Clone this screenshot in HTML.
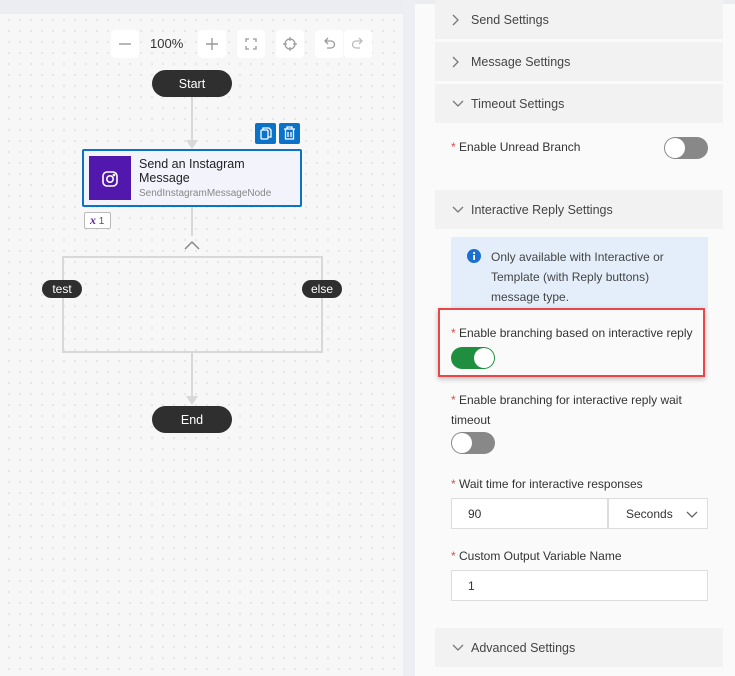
<!DOCTYPE html>
<html><head><meta charset="utf-8"><style>
*{box-sizing:border-box;margin:0;padding:0}
body{width:735px;height:676px;overflow:hidden;position:relative;background:#fafafa;font-family:"Segoe UI","Liberation Sans",sans-serif;font-size:12px;color:#333}
.a{position:absolute}
#canvas{left:0;top:0;width:403px;height:676px;background-color:#f7f7f7;background-image:radial-gradient(circle,#b4b8c0 0.6px,transparent 0.8px);background-size:11px 11px;background-position:3.5px 14.5px}
#top{left:0;top:0;width:403px;height:14px;background:#ecedf1}
#strip{left:403px;top:0;width:12px;height:676px;background:#eceef3}
.tb{background:#fff;width:28px;height:28px;border-radius:4px;top:30px;color:#999;display:flex;align-items:center;justify-content:center}
.pill{background:#2f2f2f;color:#fff;border-radius:14px;display:flex;align-items:center;justify-content:center}
.hdr{left:435px;width:288px;height:39px;background:#f2f2f2;font-size:12.5px;color:#444;display:flex;align-items:center;padding-left:36px}
.hdr svg{position:absolute;left:17px;top:14px}
.lbl{font-size:12px;color:#333}
.lbl b{color:#e04a4a;font-weight:normal}
.tog{width:44px;height:22px;border-radius:11px;background:#888}
.tog i{position:absolute;top:1px;width:20px;height:20px;border-radius:50%;background:#fff}
.inp{border:1px solid #ddd;background:#fff;height:31px;font-size:12px;display:flex;align-items:center;padding-left:16px}
</style></head><body>
<div id="canvas" class="a"></div>
<div id="top" class="a"></div>
<div id="strip" class="a"></div>

<div class="a tb" style="left:111px"><svg width="14" height="14"><path d="M1 7h12" stroke="#999" stroke-width="1.4"/></svg></div>
<div class="a" style="left:150px;top:36px;font-size:13px;color:#333">100%</div>
<div class="a tb" style="left:198px"><svg width="14" height="14"><path d="M1 7h12M7 1v12" stroke="#999" stroke-width="1.4"/></svg></div>
<div class="a tb" style="left:237px"><svg width="12" height="12" fill="none" stroke="#999" stroke-width="1.3"><path d="M1 4V1h3M8 1h3v3M11 8v3H8M4 11H1V8"/></svg></div>
<div class="a tb" style="left:276px"><svg width="14" height="14" fill="none" stroke="#999" stroke-width="1.2"><circle cx="7" cy="7" r="5"/><path d="M7 0v4M7 10v4M0 7h4M10 7h4"/></svg></div>
<div class="a tb" style="left:315px"><svg width="14" height="14" fill="none" stroke="#999" stroke-width="1.3"><path d="M4 4h5a3.5 3.5 0 010 7H5M6 1L3 4l3 3"/></svg></div>
<div class="a tb" style="left:344px"><svg width="14" height="14" fill="none" stroke="#bbb" stroke-width="1.3"><path d="M10 4H5a3.5 3.5 0 000 7h4M8 1l3 3-3 3"/></svg></div>

<div class="a" style="left:191px;top:96px;width:2px;height:45px;background:#d8d8d8"></div>
<div class="a" style="left:186px;top:140px;border-left:6px solid transparent;border-right:6px solid transparent;border-top:9px solid #d8d8d8"></div>
<div class="a" style="left:191px;top:206px;width:2px;height:30px;background:#d8d8d8"></div>
<svg class="a" style="left:184px;top:240px" width="16" height="10"><path d="M1 9l7-7 7 7" fill="none" stroke="#888" stroke-width="1.5"/></svg>
<div class="a" style="left:62px;top:256px;width:261px;height:97px;border:2px solid #d8d8d8"></div>
<div class="a" style="left:191px;top:353px;width:2px;height:45px;background:#d8d8d8"></div>
<div class="a" style="left:186px;top:396px;border-left:6px solid transparent;border-right:6px solid transparent;border-top:9px solid #d8d8d8"></div>

<div class="a pill" style="left:152px;top:70px;width:80px;height:27px;font-size:12.5px">Start</div>
<div class="a pill" style="left:152px;top:406px;width:80px;height:27px;font-size:12.5px">End</div>
<div class="a pill" style="left:42px;top:280px;width:40px;height:18px;font-size:12px">test</div>
<div class="a pill" style="left:302px;top:280px;width:40px;height:18px;font-size:12px">else</div>

<div class="a" style="left:255px;top:123px;width:21px;height:21px;background:#0a72c9;border-radius:2px"><svg width="21" height="21" fill="none" stroke="#fff" stroke-width="1.3"><rect x="6" y="7" width="7" height="9" rx="1"/><path d="M8 7V5h6l2 2v7h-3"/></svg></div>
<div class="a" style="left:279px;top:123px;width:21px;height:21px;background:#0a72c9;border-radius:2px"><svg width="21" height="21" fill="none" stroke="#fff" stroke-width="1.3"><path d="M5 6h11M8 6V4h5v2M6.5 6v10h8V6M9 9v5M12 9v5"/></svg></div>
<div class="a" style="left:82px;top:149px;width:220px;height:58px;background:#f2f3fb;border:2px solid #0a72c9;border-radius:2px"></div>
<div class="a" style="left:89px;top:156px;width:42px;height:44px;background:#5218ae"></div>
<svg class="a" style="left:101px;top:170px" width="18" height="18" fill="none" stroke="#fff" stroke-width="1.6"><rect x="2" y="2" width="14" height="14" rx="4"/><circle cx="9" cy="9" r="3.2"/><circle cx="13" cy="5" r="0.6" fill="#fff"/></svg>
<div class="a" style="left:139px;top:157px;font-size:12.5px;line-height:14px;color:#222">Send an Instagram<br>Message</div>
<div class="a" style="left:139px;top:188px;font-size:10px;color:#888">SendInstagramMessageNode</div>
<div class="a" style="left:84px;top:212px;width:27px;height:17px;border:1px solid #bbb;background:#fff;border-radius:2px;font-size:10px;color:#555;padding-left:5px;line-height:15px"><i style="color:#5a2aa8;font-weight:bold;font-family:'Liberation Serif',serif;font-size:12px">x</i> 1</div>

<div class="a" style="left:415px;top:0;width:320px;height:4px;background:#ecedf1"></div>
<div class="a hdr" style="top:0"><svg width="8" height="12"><path d="M1 1l5 5-5 5" fill="none" stroke="#777" stroke-width="1.3"/></svg>Send Settings</div>
<div class="a hdr" style="top:42px"><svg width="8" height="12"><path d="M1 1l5 5-5 5" fill="none" stroke="#777" stroke-width="1.3"/></svg>Message Settings</div>
<div class="a hdr" style="top:84px"><svg width="12" height="8" style="top:16px"><path d="M1 1l5 5 5-5" fill="none" stroke="#777" stroke-width="1.3"/></svg>Timeout Settings</div>
<div class="a lbl" style="left:451px;top:140px"><b>*</b> Enable Unread Branch</div>
<div class="a tog" style="left:664px;top:137px"><i style="left:1px"></i></div>
<div class="a hdr" style="top:190px"><svg width="12" height="8" style="top:16px"><path d="M1 1l5 5 5-5" fill="none" stroke="#777" stroke-width="1.3"/></svg>Interactive Reply Settings</div>
<div class="a" style="left:451px;top:237px;width:257px;height:72px;background:#e3eefa"></div>
<svg class="a" style="left:467px;top:249px" width="14" height="14"><circle cx="7" cy="7" r="7" fill="#1a6fd0"/><rect x="6.2" y="6" width="1.8" height="5" fill="#fff"/><circle cx="7.1" cy="4" r="1.1" fill="#fff"/></svg>
<div class="a" style="left:491px;top:247px;font-size:12px;line-height:20px;color:#444">Only available with Interactive or<br>Template (with Reply buttons)<br>message type.</div>
<div class="a" style="left:438px;top:308px;width:267px;height:69px;border:2.5px solid #e8474a;box-shadow:0 2px 5px rgba(0,0,0,.25)"></div>
<div class="a lbl" style="left:451px;top:326px"><b>*</b> Enable branching based on interactive reply</div>
<div class="a tog" style="left:451px;top:347px;background:#1f8f3f"><i style="left:23px"></i></div>
<div class="a lbl" style="left:451px;top:390px;line-height:20px"><b>*</b> Enable branching for interactive reply wait<br>timeout</div>
<div class="a tog" style="left:451px;top:432px"><i style="left:1px"></i></div>
<div class="a lbl" style="left:451px;top:477px"><b>*</b> Wait time for interactive responses</div>
<div class="a inp" style="left:451px;top:498px;width:157px">90</div>
<div class="a inp" style="left:608px;top:498px;width:100px;padding-left:17px">Seconds<svg style="position:absolute;right:9px;top:12px" width="12" height="8"><path d="M1 1l5 5 5-5" fill="none" stroke="#666" stroke-width="1.3"/></svg></div>
<div class="a lbl" style="left:451px;top:549px"><b>*</b> Custom Output Variable Name</div>
<div class="a inp" style="left:451px;top:570px;width:257px">1</div>
<div class="a hdr" style="top:628px"><svg width="12" height="8" style="top:16px"><path d="M1 1l5 5 5-5" fill="none" stroke="#777" stroke-width="1.3"/></svg>Advanced Settings</div>
</body></html>
